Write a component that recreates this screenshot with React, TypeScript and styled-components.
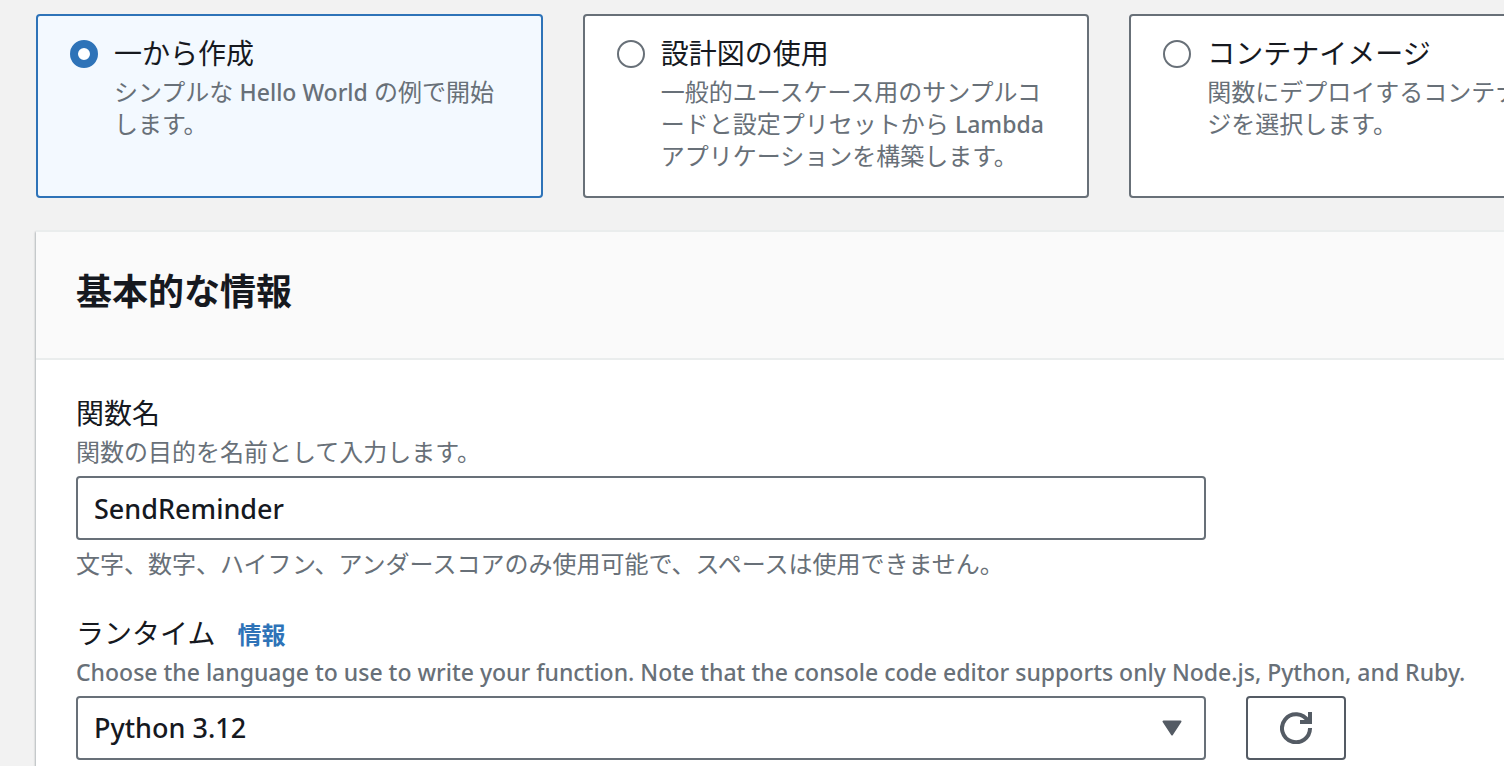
import React, { ReactNode, useState } from "react";
import styled, { createGlobalStyle } from "styled-components";

const GlobalStyle = createGlobalStyle`
  *, *::before, *::after { box-sizing: border-box; }
  body {
    margin: 0;
    background: #f2f2f2;
    color: #16191f;
    font-family: "Noto Sans", "Noto Sans CJK JP", sans-serif;
    font-size: 28px;
    line-height: 42px;
  }
`;

const Page = styled.div`
  display: flex;
  min-height: 100vh;
  overflow: hidden;
`;

const Content = styled.main`
  display: flex;
  flex: 1;
  flex-direction: column;
  gap: 32px;
  min-width: 0;
  margin: 14px -132px 0 36px;
`;

const Tiles = styled.div`
  display: grid;
  grid-template-columns: repeat(3, minmax(0, 1fr));
  gap: 40px;
`;

const Tile = styled.label<{ $selected: boolean }>`
  display: flex;
  gap: 16px;
  padding: 16px 32px 24px;
  border: 2px solid ${(p) => (p.$selected ? "#2e73b8" : "#687078")};
  border-radius: 4px;
  background: ${(p) => (p.$selected ? "#f3f9ff" : "#ffffff")};
  cursor: pointer;
`;

const Radio = styled.input`
  appearance: none;
  flex: none;
  width: 28px;
  height: 28px;
  margin: 8px 0 0;
  border: 2px solid #687078;
  border-radius: 50%;
  background: #ffffff;

  &:checked {
    border: 8px solid #2e73b8;
  }
`;

const TileText = styled.span`
  display: flex;
  flex-direction: column;
  gap: 2px;
  min-width: 0;
`;

const Description = styled.span`
  color: #687078;
  font-size: 24px;
  line-height: 32px;
`;

const Latin = styled.span`
  font-size: 23px;
  font-weight: 500;
`;

const Panel = styled.section`
  flex: 1;
  border-top: 2px solid #eaeded;
  background: #ffffff;
  box-shadow: 0 2px 2px rgba(0, 28, 36, 0.3), -1px 2px 2px rgba(0, 28, 36, 0.15);
`;

const PanelHeader = styled.header`
  padding: 38px 40px 44px;
  border-bottom: 2px solid #eaeded;
  background: #fafafa;
`;

const PanelTitle = styled.h2`
  margin: 0;
  font-size: 36px;
  line-height: 44px;
  font-weight: 700;
`;

const Form = styled.form`
  display: flex;
  flex-direction: column;
  gap: 32px;
  padding: 32px 40px 0;
`;

const Field = styled.div`
  display: flex;
  flex-direction: column;
`;

const LabelRow = styled.div`
  display: flex;
  align-items: baseline;
  gap: 22px;
  margin-bottom: 2px;
`;

const InfoLink = styled.a`
  color: #2e73b8;
  font-size: 24px;
  line-height: 32px;
  font-weight: 700;
  text-decoration: none;
`;

const ControlRow = styled.div`
  display: flex;
  gap: 40px;
  margin: 8px 0;
`;

const ControlBox = styled.div`
  position: relative;
  width: calc(75% - 10px);
`;

const controlStyle = `
  display: block;
  width: 100%;
  height: 64px;
  padding: 0 16px;
  border: 2px solid #687078;
  border-radius: 4px;
  background: #ffffff;
  color: #16191f;
  font: inherit;
  font-size: 27px;
  font-weight: 500;
`;

const TextInput = styled.input`
  ${controlStyle}
`;

const Select = styled.select`
  ${controlStyle}
  appearance: none;
`;

const Caret = styled.svg`
  position: absolute;
  top: 24px;
  right: 24px;
  pointer-events: none;
`;

const IconButton = styled.button`
  display: flex;
  align-items: center;
  justify-content: center;
  width: 100px;
  height: 64px;
  padding: 0;
  border: 2px solid #545b64;
  border-radius: 4px;
  background: #ffffff;
  color: #545b64;
`;

const options: { id: string; title: string; text: ReactNode }[] = [
  {
    id: "scratch",
    title: "一から作成",
    text: (
      <>
        シンプルな <Latin>Hello World</Latin> の例で開始します。
      </>
    ),
  },
  {
    id: "blueprint",
    title: "設計図の使用",
    text: (
      <>
        一般的ユースケース用のサンプルコードと設定プリセットから <Latin>Lambda</Latin> アプリケーションを構築します。
      </>
    ),
  },
  { id: "container", title: "コンテナイメージ", text: "関数にデプロイするコンテナイメージを選択します。" },
];

export default function App() {
  const [method, setMethod] = useState("scratch");
  const [name, setName] = useState("SendReminder");

  return (
    <Page lang="ja">
      <GlobalStyle />
      <Content>
        <Tiles role="radiogroup">
          {options.map((o) => (
            <Tile key={o.id} $selected={method === o.id}>
              <Radio type="radio" name="method" checked={method === o.id} onChange={() => setMethod(o.id)} />
              <TileText>
                <span>{o.title}</span>
                <Description>{o.text}</Description>
              </TileText>
            </Tile>
          ))}
        </Tiles>
        <Panel>
          <PanelHeader>
            <PanelTitle>基本的な情報</PanelTitle>
          </PanelHeader>
          <Form>
            <Field>
              <LabelRow>
                <label htmlFor="fn-name">関数名</label>
              </LabelRow>
              <Description>関数の目的を名前として入力します。</Description>
              <ControlRow>
                <ControlBox>
                  <TextInput id="fn-name" value={name} onChange={(e) => setName(e.target.value)} />
                </ControlBox>
              </ControlRow>
              <Description>文字、数字、ハイフン、アンダースコアのみ使用可能で、スペースは使用できません。</Description>
            </Field>
            <Field>
              <LabelRow>
                <label htmlFor="runtime">ランタイム</label>
                <InfoLink href="#info">情報</InfoLink>
              </LabelRow>
              <Description>
                <Latin>
                  Choose the language to use to write your function. Note that the console code editor supports only
                  Node.js, Python, and Ruby.
                </Latin>
              </Description>
              <ControlRow>
                <ControlBox>
                  <Select id="runtime" defaultValue="python3.12">
                    <option value="python3.12">Python 3.12</option>
                  </Select>
                  <Caret width="20" height="16" viewBox="0 0 20 16" aria-hidden="true">
                    <path d="M1.5 1.5h17L10 14.5z" fill="#545b64" stroke="#545b64" strokeWidth="2" strokeLinejoin="round" />
                  </Caret>
                </ControlBox>
                <IconButton type="button" aria-label="更新">
                  <svg width="32" height="32" viewBox="0 0 32 32" fill="none" stroke="currentColor" strokeWidth="4">
                    <path d="M30 16A14 14 0 1 1 28 9" />
                    <path d="M30 0v10H20" />
                  </svg>
                </IconButton>
              </ControlRow>
            </Field>
          </Form>
        </Panel>
      </Content>
    </Page>
  );
}
